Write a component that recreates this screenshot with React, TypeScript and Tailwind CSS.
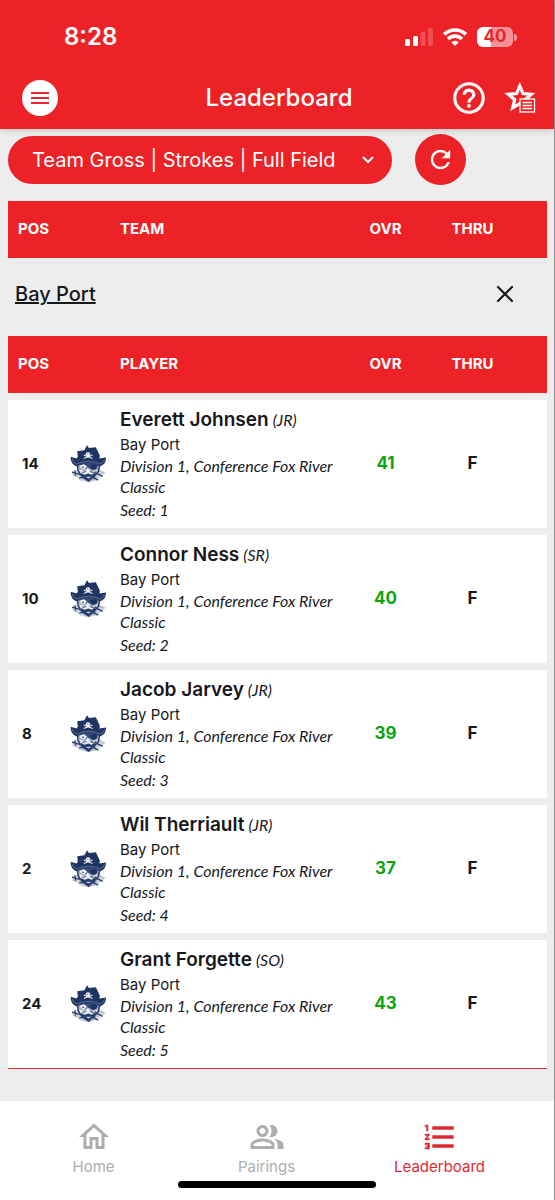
import type { ReactNode } from "react";
import {
    MdFormatListNumbered,
    MdHelpOutline,
    MdOutlineHome,
    MdOutlinePeopleAlt,
    MdRefresh,
} from "react-icons/md";

interface Player {
    pos: number;
    name: string;
    year: string;
    score: number;
    seed: number;
}

const players: Player[] = [
    { pos: 14, name: "Everett Johnsen", year: "JR", score: 41, seed: 1 },
    { pos: 10, name: "Connor Ness", year: "SR", score: 40, seed: 2 },
    { pos: 8, name: "Jacob Jarvey", year: "JR", score: 39, seed: 3 },
    { pos: 2, name: "Wil Therriault", year: "JR", score: 37, seed: 4 },
    { pos: 24, name: "Grant Forgette", year: "SO", score: 43, seed: 5 },
];

const SignalIcon = () => (
    <svg viewBox="0 0 28 18" className="h-[18px] w-7" fill="white" aria-hidden="true">
        <rect x="0" y="11" width="5" height="7" rx="1.5" />
        <rect x="8" y="8" width="5" height="10" rx="1.5" />
        <rect x="15.5" y="4" width="5" height="14" rx="1.5" opacity=".2" />
        <rect x="23" y="0" width="5" height="18" rx="1.5" opacity=".2" />
    </svg>
);

const WifiIcon = () => (
    <svg viewBox="0 0 24 18" className="h-[18px] w-6" fill="none" stroke="white" strokeWidth="3.6" aria-hidden="true">
        <path d="M1.200 6.400a15.500 15.500 0 0 1 21.600 0" />
        <path d="M5 11a10 10 0 0 1 14 0" />
        <path d="M8.300 14.200a5.300 5.300 0 0 1 7.400 0L12 18z" fill="white" stroke="none" />
    </svg>
);

const StarListIcon = () => (
    <svg viewBox="0 0 32 34" className="h-[34px] w-8" fill="none" stroke="white" aria-hidden="true">
        <path
            d="M15.800 5l3.200 7.600 8.300.7-6.300 5.400 1.900 8.100-7.100-4.300-7.100 4.300 1.900-8.100-6.300-5.400 8.300-.7z"
            strokeWidth="3.2"
        />
        <rect x="16" y="18" width="14.500" height="13" fill="#ed2227" strokeWidth="1.300" />
        <path d="M18.500 21.500h9.500M18.500 24.500h9.500M18.500 27.500h9.500" strokeWidth="1.300" />
    </svg>
);

const PirateLogo = () => (
    <svg viewBox="8 5 113 116" className="mx-auto h-[38px] w-[37px]" role="img" aria-label="Bay Port">
        <path d="M14 87l20-8h62l22 11-12 9-14 14-28 6-24-5-14-14-12-5z" fill="#d3d8e0" />
        <path d="M26 62q38-14 76 0l-4 26-14 22-19 9-19-9-14-22z" fill="#aeb8ca" />
        <path
            d="M60 6l6 8 21-2 12 25-1 9 20-3q1 19-17 27-37-17-74 0Q9 62 10 41l18 5 4-6-2-16 22-3z"
            fill="#1e3462"
        />
        <path d="M15 48q2 10 13 15 36-16 73 0 10-5 13-14" fill="none" stroke="#8391b0" strokeWidth="2" />
        <ellipse cx="63" cy="33" rx="7" ry="6" fill="white" />
        <path d="M50 36l27 10M77 36L50 46" stroke="white" strokeWidth="3" />
        <path d="M60 33h2M65 33h2" stroke="#1e3462" strokeWidth="3" />
        <path d="M35 64q29-9 59 0l-3 11-14 7-11-7-10 4-16-3z" fill="#344b78" />
        <path d="M37 68l13-4 10 6-6 9-13-2z" fill="#f3f5f8" />
        <path d="M44 71l8 1-5 4z" fill="#1e3462" />
        <path d="M68 67l18-4q8 8 1 16-13 5-19-12z" fill="#1e3462" />
        <path d="M62 72l7 13-6 5-8-4z" fill="#f0f2f6" />
        <path d="M31 67l2 17 8 12M98 67l-3 18-10 12" fill="none" stroke="#1e3462" strokeWidth="4" />
        <path d="M36 80l12 3-7 8zM92 81l-12 3 7 8z" fill="#f0f2f6" />
        <path d="M40 94l15-9 9 5 9-5 14 9-3 10-9 4-10 10-13-9-9-5z" fill="#253b69" />
        <path d="M44 93q19-13 38 0l-9 3-9-4-11 4z" fill="#e7eaf0" />
        <path d="M55 102h18l-8 5z" fill="#d4dae5" />
        <path d="M14 88l28 8M23 82l2 17M36 106l23-5M88 86L72 106M88 91l20 10M78 104l16 8" stroke="#2c416c" strokeWidth="4" />
        <path d="M17 98l14 4M99 85l13 6" stroke="#a3adbf" strokeWidth="3" />
    </svg>
);

const Columns = () => (
    <colgroup>
        <col className="w-12" />
        <col className="w-16" />
        <col />
        <col className="w-[87px]" />
        <col className="w-[87px]" />
        <col className="w-[31px]" />
    </colgroup>
);

const HeaderRow = ({ label }: { label: string }) => (
    <thead>
        <tr className="h-[57px] bg-[#ed2227] text-[15px] text-white">
            <th className="pl-[10px] text-left font-bold">POS</th>
            <th></th>
            <th className="text-left font-bold">{label}</th>
            <th className="font-bold">OVR</th>
            <th className="font-bold">THRU</th>
            <th></th>
        </tr>
    </thead>
);

const PlayerRow = ({ player }: { player: Player }) => (
    <tr className="bg-white">
        <td className="pl-[14px] text-[15px] font-bold">{player.pos}</td>
        <td>
            <PirateLogo />
        </td>
        <td className="pt-[6px] pb-2 leading-[21px]">
            <div className="flex items-center gap-1 whitespace-nowrap leading-7">
                <span className="text-[19px] font-semibold">{player.name}</span>
                <i className="font-[Lato,sans-serif] text-base">({player.year})</i>
            </div>
            <p className="text-[15px]">Bay Port</p>
            <p className="font-[Lato,sans-serif] text-base leading-[21px] italic">
                Division 1, Conference Fox River Classic
            </p>
            <p className="mt-[2px] font-[Lato,sans-serif] text-base leading-[21px] italic">
                Seed: {player.seed}
            </p>
        </td>
        <td className="text-center text-[17px] font-bold text-[#0aa50f]">{player.score}</td>
        <td className="text-center text-[17px] font-bold">F</td>
        <td></td>
    </tr>
);

const Spacer = ({ height }: { height: string }) => (
    <tr aria-hidden="true">
        <td colSpan={6} className={height}></td>
    </tr>
);

const NavLink = ({ label, active, children }: { label: string; active?: boolean; children: ReactNode }) => (
    <a
        href="#"
        aria-current={active ? "page" : undefined}
        className={`flex flex-1 flex-col items-center text-[15px] leading-5 ${active ? "text-[#df2930]" : "text-[#adadb0]"}`}
    >
        {children}
        <span className="mt-[2px]">{label}</span>
    </a>
);

const App = () => {
    return (
        <div className="flex min-h-screen flex-col border-r border-[#929292] bg-[#ededed] font-[Inter,sans-serif] text-[#17181c]">
            <header className="z-10 bg-[#ed2227] text-white shadow-md">
                <div className="flex h-[67px] items-center justify-between pt-[7px] pr-[37px] pl-16">
                    <time className="text-2xl font-semibold">8:28</time>
                    <div className="flex items-center gap-[10px]">
                        <SignalIcon />
                        <WifiIcon />
                        <div className="flex items-center gap-[1px]">
                            <span className="flex h-5 w-9 items-center justify-center rounded-md bg-linear-to-r from-white from-40% to-[#f69195] to-40% text-[17px] font-bold text-[#df2930]">
                                40
                            </span>
                            <span className="h-[7px] w-[3px] rounded-r-full bg-[#f69195]"></span>
                        </div>
                    </div>
                </div>
                <div className="grid h-[62px] grid-cols-[1fr_auto_1fr] items-center pr-[18px] pl-[22px]">
                    <button
                        aria-label="Menu"
                        className="flex h-9 w-9 flex-col items-center justify-center gap-[3px] rounded-full bg-white"
                    >
                        <span className="h-[2px] w-[18px] bg-[#df2930]"></span>
                        <span className="h-[2px] w-[18px] bg-[#df2930]"></span>
                        <span className="h-[2px] w-[18px] bg-[#df2930]"></span>
                    </button>
                    <h1 className="text-2xl font-medium">Leaderboard</h1>
                    <div className="flex items-center justify-end gap-4">
                        <button aria-label="Help">
                            <MdHelpOutline size={38} />
                        </button>
                        <button aria-label="Favorites">
                            <StarListIcon />
                        </button>
                    </div>
                </div>
            </header>

            <main className="flex-1 pt-[5px] pr-[7px] pb-8 pl-2">
                <div className="flex items-center gap-[23px]">
                    <button className="flex h-12 w-96 items-center justify-between rounded-full bg-[#ed2227] pr-[18px] pl-6 text-xl text-white">
                        Team Gross | Strokes | Full Field
                        <svg viewBox="0 0 12 8" className="h-2 w-3" fill="none" stroke="white" strokeWidth="2" aria-hidden="true">
                            <path d="M1 1l5 5 5-5" />
                        </svg>
                    </button>
                    <button
                        aria-label="Refresh"
                        className="flex h-[51px] w-[51px] items-center justify-center rounded-full bg-[#ed2227] text-white"
                    >
                        <MdRefresh size={29} />
                    </button>
                </div>

                <table className="mt-4 w-full table-fixed">
                    <Columns />
                    <HeaderRow label="TEAM" />
                    <tbody>
                        <tr className="h-[78px]">
                            <td colSpan={6} className="pr-8 pl-[7px]">
                                <div className="flex items-center justify-between pb-[6px]">
                                    <a href="#" className="text-xl font-medium underline">Bay Port</a>
                                    <button aria-label="Close">
                                        <svg viewBox="0 0 20 20" className="h-5 w-5" stroke="currentColor" strokeWidth="2.200" strokeLinecap="round">
                                            <path d="M3 3l14 14M17 3L3 17" />
                                        </svg>
                                    </button>
                                </div>
                            </td>
                        </tr>
                    </tbody>
                </table>

                <table className="w-full table-fixed border-b border-[#df2930]">
                    <Columns />
                    <HeaderRow label="PLAYER" />
                    {players.map((player) => (
                        <tbody key={player.seed}>
                            <Spacer height="h-[7px]" />
                            <PlayerRow player={player} />
                        </tbody>
                    ))}
                </table>
            </main>

            <footer className="bg-white pt-[18px] pb-3">
                <nav className="flex pr-7 pl-[7px]">
                    <NavLink label="Home">
                        <MdOutlineHome size={36} />
                    </NavLink>
                    <NavLink label="Pairings">
                        <MdOutlinePeopleAlt size={36} />
                    </NavLink>
                    <NavLink label="Leaderboard" active>
                        <MdFormatListNumbered size={36} className="[&>path]:stroke-current [&>path]:stroke-[0.3] [&>path[fill=none]]:stroke-none" />
                    </NavLink>
                </nav>
                <div className="mx-auto mt-1 h-[7px] w-[198px] rounded-full bg-black"></div>
            </footer>
        </div>
    );
};

export default App;
